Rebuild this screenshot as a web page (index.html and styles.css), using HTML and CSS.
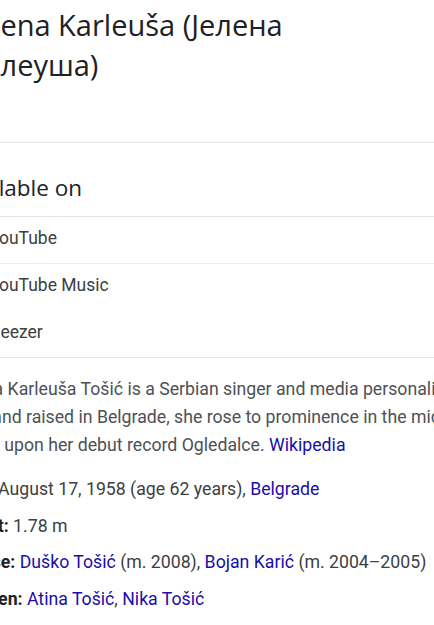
FILE: index.html
```html
<!DOCTYPE html>
<html lang="en">
<head>
<meta charset="utf-8">
<title>Jelena Karleuša</title>
<link rel="stylesheet" href="styles.css">
</head>
<body>
<div class="panel">
  <h2 class="title"><span class="line first">Jelena Karleuša (Јелена</span><span class="line second">Карлеуша)</span></h2>

  <section class="available">
    <h3 class="section-title">Available on</h3>
    <ul class="providers">
      <li class="provider with-rule"><span class="logo yt"></span><span class="name">YouTube</span></li>
      <li class="provider"><span class="logo ytm"></span><span class="name">YouTube Music</span></li>
      <li class="provider last"><span class="logo dz"></span><span class="name">Deezer</span></li>
    </ul>
  </section>

  <div class="description">
    <span class="line">Jelena Karleuša Tošić is a Serbian singer and media personality. Born</span>
    <span class="line">Born and raised in Belgrade, she rose to prominence in the mid-</span>
    <span class="line">1990s upon her debut record Ogledalce. <a class="link" href="#">Wikipedia</a></span>
  </div>

  <div class="facts">
    <div class="fact"><span class="label">Born: </span>August 17, 1958 (age 62 years), <a class="link" href="#">Belgrade</a></div>
    <div class="fact"><span class="label">Height: </span>1.78 m</div>
    <div class="fact"><span class="label">Spouse: </span><a class="link" href="#">Duško Tošić</a> (m. 2008), <a class="link" href="#">Bojan Karić</a> (m. 2004–2005)</div>
    <div class="fact"><span class="label">Children: </span><a class="link" href="#">Atina Tošić</a>, <a class="link" href="#">Nika Tošić</a></div>
  </div>
</div>
</body>
</html>
```

FILE: styles.css
```css
html, body {
  margin: 0;
  padding: 0;
  background: #ffffff;
  overflow: hidden;
}

body {
  font-family: Roboto, "Liberation Sans", Arial, sans-serif;
  color: #202124;
}

.panel {
  width: 760px;
  margin-left: -49px;
}

.line {
  display: block;
  white-space: nowrap;
}

.title {
  margin: 0;
  padding: 5px 0 57px 0;
  font-family: "Open Sans", sans-serif;
  font-weight: 400;
  font-size: 29px;
  line-height: 40px;
  color: #202124;
  border-bottom: 1px solid #e4e4e4;
}

.title .first {
  margin-left: 18px;
}

.title .second {
  margin-left: -2px;
}

.section-title {
  margin: 0 0 0 4px;
  padding: 31px 0 14px 0;
  font-family: "Open Sans", sans-serif;
  font-weight: 400;
  font-size: 22.5px;
  line-height: 28px;
  color: #202124;
}

.providers {
  list-style: none;
  margin: 0;
  padding: 0;
  border-top: 1px solid #e4e4e4;
  border-bottom: 1px solid #e4e4e4;
}

.provider {
  display: flex;
  align-items: flex-start;
  gap: 14px;
  box-sizing: border-box;
  height: 47px;
  padding-top: 11px;
  font-size: 17.5px;
  line-height: 20px;
  color: #3c4043;
}

.provider.with-rule {
  border-bottom: 1px solid #ececec;
}

.provider.last {
  height: 46px;
}

.logo {
  width: 24px;
  height: 24px;
  border-radius: 4px;
  flex: none;
}
.logo.yt { background: #ff0000; }
.logo.ytm { background: #ff0000; border-radius: 50%; }
.logo.dz { background: #222222; }

.description {
  padding-top: 17px;
  font-size: 17.7px;
  line-height: 28px;
  color: #4d5156;
}

.facts {
  padding-top: 12px;
  font-size: 17.7px;
  line-height: 36.67px;
  color: #3c4043;
}

.fact {
  white-space: nowrap;
}

.label {
  font-weight: 700;
  color: #202124;
}

.link {
  color: #1a0dab;
  text-decoration: none;
}
```
